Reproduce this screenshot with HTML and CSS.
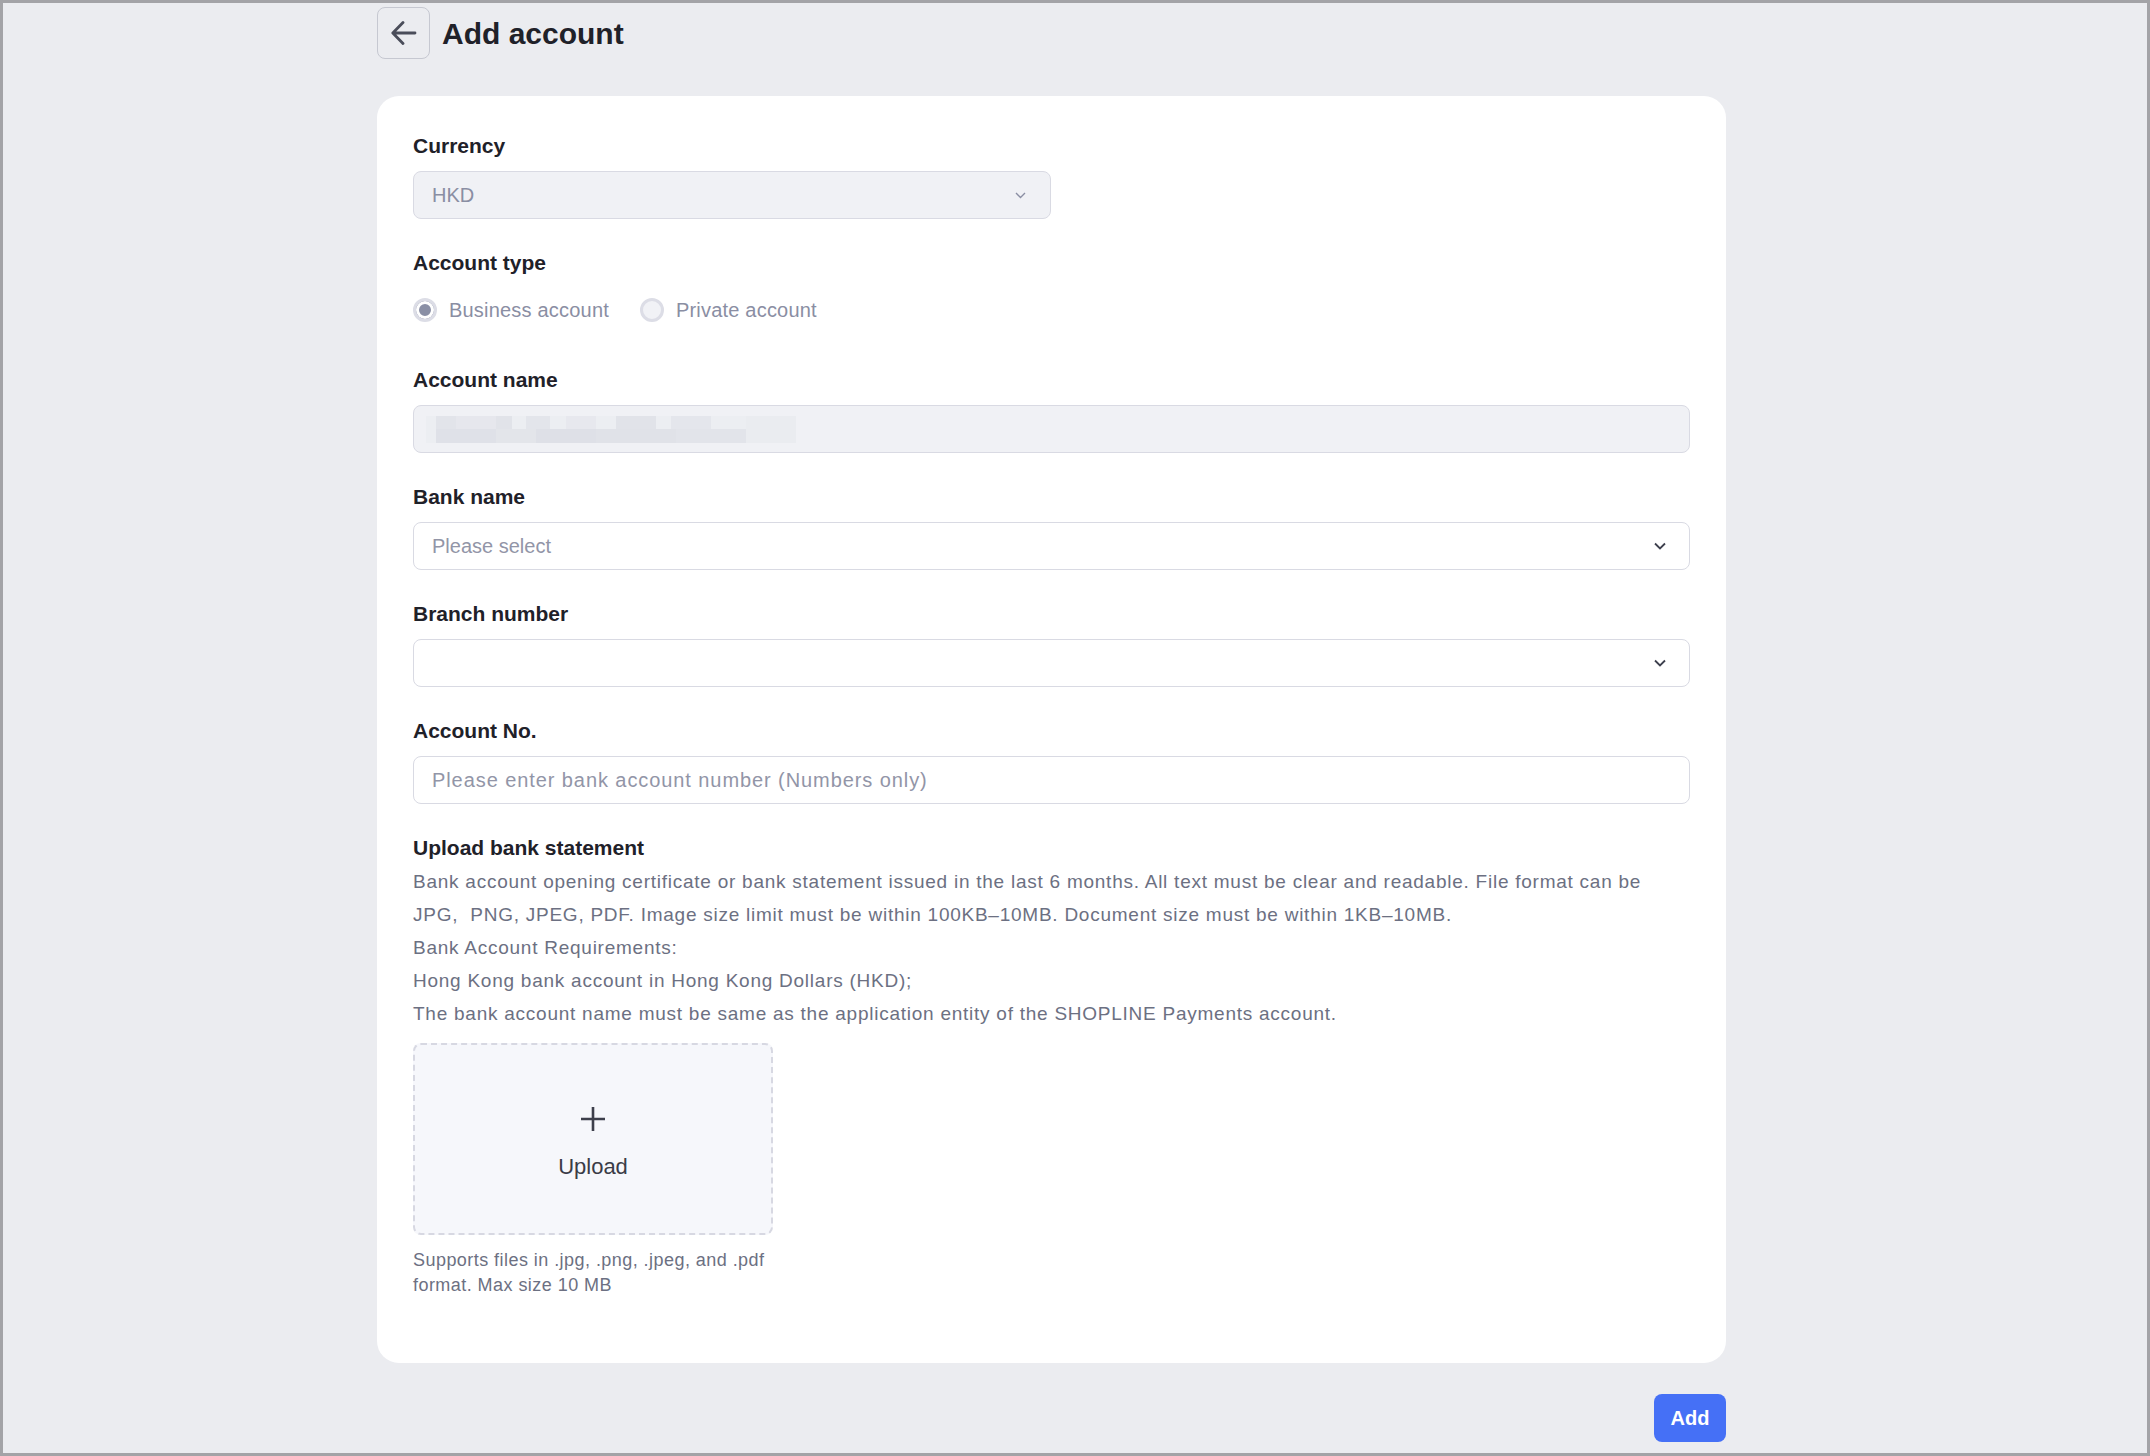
FILE: index.html
```html
<!DOCTYPE html>
<html lang="en">
<head>
  <title>Add account</title>
  <link rel="stylesheet" href="styles.css">
</head>
<body>

<div class="page">
  <div class="header">
    <button class="back" type="button">
      <svg width="26" height="26" viewBox="0 0 26 26"><path d="M24 13H2M12 2.5 1.8 13 12 23.5" fill="none" stroke="#4a4d5a" stroke-width="2.8" stroke-linecap="round" stroke-linejoin="round"/></svg>
    </button>
    <h1 class="title">Add account</h1>
  </div>

  <form class="card">
    <div class="item">
      <label>Currency</label>
      <div class="select disabled short">
        <span>HKD</span>
        <svg width="11" height="7" viewBox="0 0 11 7"><path d="M1 1l4.5 4.5L10 1" fill="none" stroke="#8a8ea3" stroke-width="1.4"/></svg>
      </div>
    </div>

    <div class="item item-radio">
      <label>Account type</label>
      <div class="radios">
        <span class="radio checked"><i></i>Business account</span>
        <span class="radio"><i></i>Private account</span>
      </div>
    </div>

    <div class="item">
      <label>Account name</label>
      <div class="select disabled">
        <svg class="blur" width="370" height="27" viewBox="0 0 370 27">
          <rect x="0" y="0" width="370" height="27" fill="#eceef2"/>
          <rect x="10" y="0" width="20" height="13" fill="#e2e4ea"/>
          <rect x="30" y="0" width="40" height="13" fill="#e6e7ed"/>
          <rect x="70" y="0" width="16" height="13" fill="#e1e3e9"/>
          <rect x="100" y="0" width="24" height="13" fill="#e3e5eb"/>
          <rect x="140" y="0" width="30" height="13" fill="#e7e8ee"/>
          <rect x="190" y="0" width="40" height="13" fill="#e1e3e9"/>
          <rect x="245" y="0" width="40" height="13" fill="#e4e6ec"/>
          <rect x="10" y="13" width="60" height="14" fill="#dfe1e8"/>
          <rect x="70" y="13" width="40" height="14" fill="#e3e5ea"/>
          <rect x="110" y="13" width="60" height="14" fill="#dee0e7"/>
          <rect x="170" y="13" width="80" height="14" fill="#e0e2e8"/>
          <rect x="250" y="13" width="70" height="14" fill="#e2e4ea"/>
          <rect x="320" y="0" width="50" height="27" fill="#eaecf0"/>
        </svg>
      </div>
    </div>

    <div class="item">
      <label>Bank name</label>
      <div class="select">
        <span class="placeholder">Please select</span>
        <svg width="12" height="8" viewBox="0 0 12 8"><path d="M1 1.5l5 5 5-5" fill="none" stroke="#3d404d" stroke-width="1.8"/></svg>
      </div>
    </div>

    <div class="item">
      <label>Branch number</label>
      <div class="select">
        <span></span>
        <svg width="12" height="8" viewBox="0 0 12 8"><path d="M1 1.5l5 5 5-5" fill="none" stroke="#3d404d" stroke-width="1.8"/></svg>
      </div>
    </div>

    <div class="item">
      <label for="accountNo">Account No.</label>
      <input class="field" type="text" id="accountNo" placeholder="Please enter bank account number (Numbers only)">
    </div>

    <div class="item">
      <label class="tight">Upload bank statement</label>
      <p class="desc">Bank account opening certificate or bank statement issued in the last 6 months. All text must be clear and readable. File format can be JPG,&nbsp; PNG, JPEG, PDF. Image size limit must be within 100KB–10MB. Document size must be within 1KB–10MB.<br>
      Bank Account Requirements:<br>
      Hong Kong bank account in Hong Kong Dollars (HKD);<br>
      The bank account name must be same as the application entity of the SHOPLINE Payments account.</p>
      <div class="upload">
        <svg width="26" height="26" viewBox="0 0 26 26"><path d="M13 1v24M1 13h24" stroke="#3d3f4b" stroke-width="2.6"/></svg>
        <span>Upload</span>
      </div>
      <p class="hint">Supports files in .jpg, .png, .jpeg, and .pdf format. Max size 10 MB</p>
    </div>
  </form>

  <div class="footer">
    <button class="btn-primary" type="button">Add</button>
  </div>
</div>

</body>
</html>
```

FILE: styles.css
```css
* {
  box-sizing: border-box;
}
body {
  margin: 0;
  height: 1456px;
  border: 3px solid #a3a3a7;
  background-color: #ebecf0;
  font-family: "Liberation Sans", Arial, sans-serif;
  color: #1f2129;
  overflow: hidden;
}
.page {
  width: 1723px;
  padding: 4px 0 0 374px;
}
.header {
  display: flex;
  align-items: center;
  gap: 12px;
  height: 52px;
}
.back {
  width: 53px;
  height: 52px;
  display: flex;
  align-items: center;
  justify-content: center;
  border: 1px solid #c6c8d1;
  border-radius: 8px;
  background: transparent;
  padding: 0;
}
.title {
  margin: 2px 0 0;
  font-size: 30px;
  font-weight: bold;
  color: #1f2129;
}
.card {
  display: block;
  margin-top: 37px;
  padding: 36px;
  border-radius: 22px;
  background-color: #fff;
}
.item {
  margin-bottom: 30px;
}
.item-radio {
  margin-bottom: 34px;
}
label {
  display: block;
  font-size: 21px;
  font-weight: bold;
  line-height: 28px;
  margin-bottom: 11px;
  color: #1f2129;
}
label.tight {
  margin-bottom: 3px;
}
.select,
.field {
  display: flex;
  align-items: center;
  justify-content: space-between;
  width: 100%;
  height: 48px;
  padding: 0 23px 0 18px;
  border: 1px solid #d9dae3;
  border-radius: 8px;
  background-color: #fff;
  font-size: 20px;
  font-family: inherit;
  color: #1f2129;
}
.select.short {
  width: 638px;
}
.select.disabled {
  background-color: #f0f1f5;
  color: #8a8ea3;
}
.select.short svg {
  margin-right: 1px;
}
.placeholder,
.field::placeholder {
  color: #9295a7;
}
.field {
  outline: none;
  letter-spacing: 0.92px;
}
.blur {
  margin-left: -6px;
}
.radios {
  display: flex;
  align-items: center;
  gap: 31px;
  height: 44px;
}
.radio {
  display: flex;
  align-items: center;
  gap: 12px;
  font-size: 20px;
  letter-spacing: 0.2px;
  color: #8a8ea3;
}
.radio i {
  display: block;
  width: 24px;
  height: 24px;
  border: 3px solid #dcdde6;
  border-radius: 50%;
  background-color: #f1f2f6;
}
.radio.checked i {
  background-color: #8a8fa5;
  box-shadow: inset 0 0 0 3px #fff;
}
.desc {
  margin: 0;
  font-size: 19px;
  letter-spacing: 0.75px;
  line-height: 33px;
  color: #6c7082;
}
.upload {
  display: flex;
  flex-direction: column;
  align-items: center;
  justify-content: center;
  gap: 20px;
  width: 360px;
  height: 192px;
  margin-top: 13px;
  padding-top: 9px;
  border: 2px dashed #d7d8e2;
  border-radius: 8px;
  background-color: #f6f7fb;
  font-size: 22px;
  line-height: 30px;
  color: #3a3c47;
}
.hint {
  width: 360px;
  margin: 13px 0 0;
  font-size: 18px;
  letter-spacing: 0.45px;
  line-height: 24.5px;
  color: #6c7082;
}
.footer {
  display: flex;
  justify-content: flex-end;
  margin-top: 31px;
}
.btn-primary {
  width: 72px;
  height: 48px;
  border: none;
  border-radius: 8px;
  background-color: #4570f6;
  color: #fff;
  font-family: inherit;
  font-size: 20px;
  font-weight: bold;
  cursor: pointer;
}
```
